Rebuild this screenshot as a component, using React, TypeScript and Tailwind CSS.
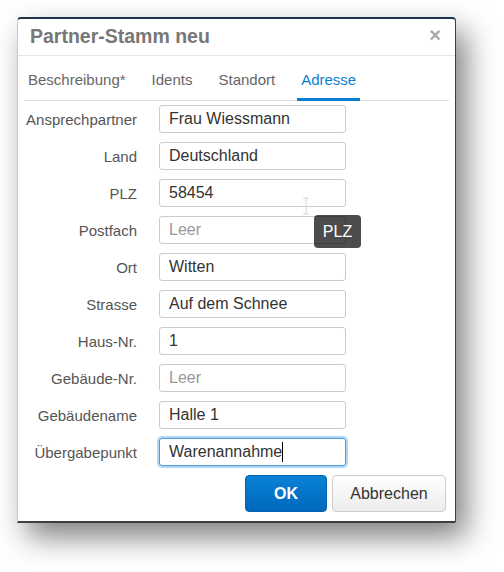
import React from "react";

const rows: { label: string; value?: string; placeholder?: string; focused?: boolean }[] = [
  { label: "Ansprechpartner", value: "Frau Wiessmann" },
  { label: "Land", value: "Deutschland" },
  { label: "PLZ", value: "58454" },
  { label: "Postfach", placeholder: "Leer" },
  { label: "Ort", value: "Witten" },
  { label: "Strasse", value: "Auf dem Schnee" },
  { label: "Haus-Nr.", value: "1" },
  { label: "Gebäude-Nr.", placeholder: "Leer" },
  { label: "Gebäudename", value: "Halle 1" },
  { label: "Übergabepunkt", value: "Warenannahme", focused: true },
];

const tabs = ["Beschreibung*", "Idents", "Standort", "Adresse"];

export default function App() {
  return (
    <div
      className="w-[504px] h-[572px] bg-white pl-[17px] pt-[17px]"
      style={{ fontFamily: '"Liberation Sans", Arial, sans-serif' }}
    >
      <div className="relative w-[439px] h-[506px] bg-white flex flex-col rounded-t-[4px] rounded-br-[2px] border-t-2 border-t-[#1d3347] border-r border-r-[#3e3e3e] border-b-2 border-b-[#3e3e3e] border-l border-l-[#c8c8c8] shadow-[10px_14px_30px_rgba(0,0,0,0.5)]">
        {/* Header */}
        <div className="h-[37px] flex items-center justify-between border-b border-[#e5e5e5] pl-[12px] pr-[14px]">
          <span className="text-[19.5px] font-bold text-[#777] leading-none">Partner-Stamm neu</span>
          <span className="text-[20px] font-bold text-[#a8a8a8] leading-none -mt-[5px]">×</span>
        </div>
        {/* Tabs */}
        <div className="mx-[6px] flex gap-[18px] border-b border-[#e0e0e0]">
          {tabs.map((t, i) => {
            const active = i === 3;
            return (
              <div
                key={t}
                className={
                  active
                    ? "-mb-px px-[4px] pt-[15px] pb-[10px] border-b-[3px] border-[#0a7fd2] text-[15px] leading-[17px] text-[#0a7fd2]"
                    : "-mb-px px-[4px] pt-[15px] pb-[13px] text-[15px] leading-[17px] text-[#666]"
                }
              >
                {t}
              </div>
            );
          })}
        </div>
        {/* Form */}
        <div className="mt-[4px] flex flex-col gap-[9px]">
          {rows.map((r) => (
            <div key={r.label} className="flex items-center h-[28px]">
              <div className="w-[119px] text-right text-[15px] text-[#555] leading-none">{r.label}</div>
              <div
                className={
                  r.focused
                    ? "ml-[22px] w-[187px] h-[28px] rounded-[3px] border border-[#4c9be0] shadow-[0_0_0_2px_rgba(102,175,233,0.5)] flex items-center pl-[9px] text-[16px] text-[#333]"
                    : "ml-[22px] w-[187px] h-[28px] rounded-[3px] border border-[#cccccc] flex items-center pl-[9px] text-[16px] text-[#333]"
                }
              >
                {r.value ? (
                  <span className="leading-none">{r.value}</span>
                ) : (
                  <span className="leading-none text-[#999]">{r.placeholder}</span>
                )}
                {r.focused && <span className="inline-block w-px h-[20px] bg-black" />}
              </div>
            </div>
          ))}
        </div>
        {/* Buttons */}
        <div className="mt-[9px] flex justify-end gap-[5px] pr-[9px]">
          <button className="w-[82px] h-[37px] rounded-[4px] border border-[#0062ae] bg-gradient-to-b from-[#0b82d6] to-[#0068bb] text-white text-[16px] font-bold">
            OK
          </button>
          <button className="w-[114px] h-[37px] rounded-[4px] border border-[#cccccc] bg-gradient-to-b from-[#ffffff] to-[#ececec] text-[#333] text-[16px]">
            Abbrechen
          </button>
        </div>

        {/* Mouse text cursor */}
        <svg className="absolute left-[284px] top-[178px]" width="8" height="18" viewBox="0 0 8 18">
          <path d="M1 1h6M4 1v16M1 17h6" stroke="#d6d6d6" strokeWidth="1" fill="none" />
        </svg>
        {/* Tooltip */}
        <div className="absolute left-[296px] top-[196px] w-[47px] h-[33px] rounded-[4px] bg-black/70 flex items-center justify-center text-white text-[16px]">
          PLZ
        </div>
      </div>
    </div>
  );
}
